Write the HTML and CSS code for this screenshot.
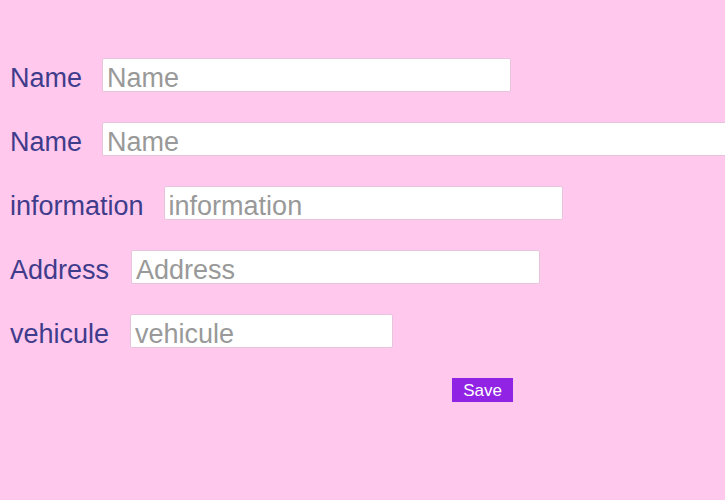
FILE: index.html
```html
<!DOCTYPE html>
<html lang="en">
<head>
<meta charset="utf-8">
<title>Form</title>
<link rel="stylesheet" href="styles.css">
</head>
<body>
<form class="form">
  <div class="row">
    <label class="label label-name">Name</label>
    <input class="field w-name" type="text" placeholder="Name">
  </div>
  <div class="row">
    <label class="label label-name">Name</label>
    <input class="field w-wide" type="text" placeholder="Name">
  </div>
  <div class="row">
    <label class="label label-info">information</label>
    <input class="field w-info" type="text" placeholder="information">
  </div>
  <div class="row">
    <label class="label label-address">Address</label>
    <input class="field w-address" type="text" placeholder="Address">
  </div>
  <div class="row">
    <label class="label label-veh">vehicule</label>
    <input class="field w-veh" type="text" placeholder="vehicule">
  </div>
  <div class="actions">
    <button class="save" type="button">Save</button>
  </div>
</form>
</body>
</html>
```

FILE: styles.css
```css
html, body {
  margin: 0;
  padding: 0;
  overflow: hidden;
}
body {
  background: #ffc8ec;
  width: 725px;
  height: 500px;
  font-family: "Liberation Sans", Arial, sans-serif;
}
.form {
  display: flex;
  flex-direction: column;
  gap: 30px;
  padding: 58px 0 0 10px;
}
.row {
  display: flex;
  align-items: baseline;
  height: 34px;
}
.label {
  font-size: 27px;
  color: #3f3c8c;
  white-space: nowrap;
}
.label-name { margin-right: 20px; }
.label-info { margin-right: 20px; }
.label-address { margin-right: 22px; }
.label-veh { margin-right: 21px; }
.field {
  box-sizing: border-box;
  height: 34px;
  flex: none;
  border: 1px solid #e6c4dc;
  border-radius: 2px;
  background: #ffffff;
  padding: 7px 4px 0 4px;
  font-family: "Liberation Sans", Arial, sans-serif;
  font-size: 27px;
  color: #333;
  outline: none;
}
.field::placeholder {
  color: #999999;
}
.w-name { width: 409px; }
.w-wide { width: 680px; }
.w-info { width: 399px; }
.w-address { width: 409px; }
.w-veh { width: 263px; }
.actions {
  display: flex;
  padding-left: 442px;
}
.save {
  box-sizing: border-box;
  width: 61px;
  height: 24px;
  border: none;
  border-radius: 0;
  background: #9124e4;
  color: #ffffff;
  font-family: "Liberation Sans", Arial, sans-serif;
  font-size: 17px;
  padding: 2px 0 0 0;
  line-height: 22px;
}
```
